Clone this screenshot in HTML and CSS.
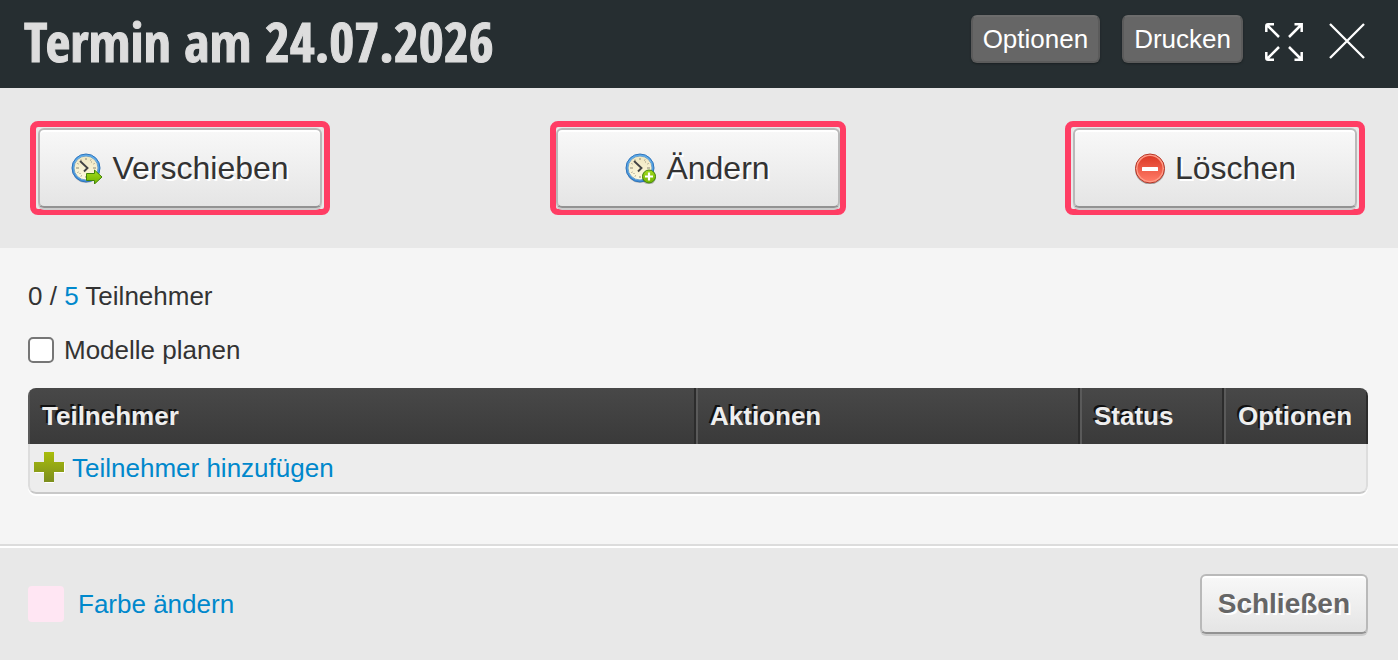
FILE: index.html
```html
<!DOCTYPE html>
<html lang="de">
<head>
<meta charset="utf-8">
<title>Termin am 24.07.2026</title>
<link rel="stylesheet" href="styles.css">
</head>
<body>
<svg class="defs" aria-hidden="true">
  <defs>
    <linearGradient id="face" x1="0" y1="0" x2="0" y2="1"><stop offset="0" stop-color="#efe6c0"/><stop offset="1" stop-color="#fffbe0"/></linearGradient>
    <linearGradient id="rim" x1="0" y1="0" x2="0" y2="1"><stop offset="0" stop-color="#5fb0f0"/><stop offset="1" stop-color="#3f8fdb"/></linearGradient>
    <linearGradient id="green" x1="0" y1="0" x2="0" y2="1"><stop offset="0" stop-color="#a5dc1c"/><stop offset="1" stop-color="#6fb400"/></linearGradient>
    <linearGradient id="red" x1="0" y1="0" x2="0" y2="1"><stop offset="0" stop-color="#dc3a26"/><stop offset="1" stop-color="#ff7a66"/></linearGradient>
    <linearGradient id="olive" x1="0" y1="0" x2="0" y2="1"><stop offset="0" stop-color="#a9bd0c"/><stop offset="1" stop-color="#7c8e1e"/></linearGradient>
    <g id="clock">
      <circle cx="15" cy="16" r="14" fill="#000" opacity=".18"/>
      <circle cx="15" cy="15" r="14" fill="url(#rim)" stroke="#2f74ba" stroke-width="1"/>
      <circle cx="15" cy="15" r="12" fill="url(#face)" stroke="#6fa3cc" stroke-width="1"/>
      <path d="M15 5v2M15 23v2M5 15h3M22 15h3M21 8.500l-.8.800M8.500 21l.8-.8M10 6.500l.5 1M20 6.500l-.5 1M6.500 10.500l1 .5M23.500 10.500l-1 .5M6.500 19.500l1-.5M10 23.500l.5-1" stroke="#8d8874" stroke-width="1" fill="none"/>
      <path d="M9 8l7.500 7-3.500 3.500" stroke="#444" stroke-width="1.900" fill="none"/>
    </g>
  </defs>
</svg>
<main class="dialog">
  <header class="header">
    <h1 class="title">Termin am 24.07.2026</h1>
    <div class="header-tools">
      <button class="tool" type="button">Optionen</button>
      <button class="tool" type="button">Drucken</button>
      <button class="icon-button expand" type="button" aria-label="Vollbild">
        <svg width="38" height="38" viewBox="0 0 38 38" fill="none" stroke="#fff" stroke-width="2.500">
          <path d="M1.300 9V3q0-1.700 1.700-1.700h6M2 2l12 12M29.500 1.300h7.200v7.700M36 2L24 14M1.300 29v6q0 1.700 1.700 1.700h6M2 36l12-12M29.500 36.700h7.200V29M36 36L24 24"/>
        </svg>
      </button>
      <button class="icon-button" type="button" aria-label="Dialog schließen">
        <svg width="36" height="36" viewBox="0 0 36 36" fill="none" stroke="#fff" stroke-width="2.300"><path d="M1 1l34 34M35 1L1 35"/></svg>
      </button>
    </div>
  </header>

  <section class="actions">
    <div class="frame">
      <button class="button action" type="button">
        <svg width="32" height="32" viewBox="0 -1 32 32"><use href="#clock"/><path d="M15.500 20.500h8v-3.500l7.500 7-7.500 7v-3.500h-8z" fill="url(#green)" stroke="#42850a" stroke-width="1"/></svg>
        <span>Verschieben</span>
      </button>
    </div>
    <div class="frame frame-flush">
      <button class="button action" type="button">
        <svg width="32" height="32" viewBox="0 -1 32 32"><use href="#clock"/><circle cx="24" cy="24.500" r="7" fill="#000" opacity=".2"/><circle cx="24" cy="23.500" r="6.500" fill="url(#green)" stroke="#42850a" stroke-width="1"/><path d="M24 19.500v8M20 23.500h8" stroke="#fff" stroke-width="2.200"/></svg>
        <span>Ändern</span>
      </button>
    </div>
    <div class="frame">
      <button class="button action" type="button">
        <svg width="32" height="32" viewBox="0 -2 32 32"><circle cx="16" cy="15.500" r="15" fill="#000" opacity=".3"/><circle cx="16" cy="14.500" r="14.500" fill="#ff9b87" stroke="#b63526" stroke-width="1"/><circle cx="16" cy="14.500" r="12.500" fill="url(#red)"/><rect x="8" y="13" width="16" height="4" rx=".5" fill="#fff"/></svg>
        <span>Löschen</span>
      </button>
    </div>
  </section>

  <section class="content">
    <p class="count">0 / <a class="link" href="#">5</a> Teilnehmer</p>
    <label class="check"><input type="checkbox"><span>Modelle planen</span></label>
    <div class="table-box">
      <table class="table">
        <thead>
          <tr><th>Teilnehmer</th><th class="col-actions">Aktionen</th><th class="col-small">Status</th><th class="col-small">Optionen</th></tr>
        </thead>
        <tbody>
          <tr><td colspan="4">
            <a class="link add" href="#"><svg width="32" height="32" viewBox="1 1 32 32"><path d="M12 2h9v10h11v10H21v10H12V22H2V12h10z" fill="#fff"/><path d="M11 1h10v10h10v10H21v10H11V21H1V11h10z" fill="url(#olive)"/></svg><span>Teilnehmer hinzufügen</span></a>
          </td></tr>
        </tbody>
      </table>
    </div>
  </section>

  <footer class="footer">
    <a class="link color" href="#"><span class="swatch"></span><span>Farbe ändern</span></a>
    <button class="button close" type="button">Schließen</button>
  </footer>
</main>
</body>
</html>
```

FILE: styles.css
```css
* { box-sizing: border-box; }

body {
  margin: 0;
  background: #e8e8e8;
  color: #333;
  font: 26px/36px Helvetica, "Liberation Sans", Arial, sans-serif;
}

button {
  margin: 0;
  font-family: inherit;
  cursor: pointer;
}

svg { display: block; flex: none; }

.defs { position: absolute; width: 0; height: 0; }

.dialog {
  display: flex;
  flex-direction: column;
  min-height: 100vh;
}

.header {
  display: flex;
  justify-content: space-between;
  padding: 0 33px 0 24px;
  min-height: 88px;
  background: #262e31;
}

.title {
  margin: 0;
  color: #ddd;
  font: bold 54px/82px "Open Sans Condensed", "Liberation Sans Narrow", "Roboto Condensed", sans-serif;
  -webkit-text-stroke: 1px #ddd;
}

.header-tools {
  display: flex;
  align-items: flex-start;
  padding-top: 15px;
}

.tool {
  height: 48px;
  margin-right: 22px;
  padding: 0 10px;
  border: 2px solid #5b5b5b;
  border-top-color: #6c6c6c;
  border-radius: 6px;
  background: #666;
  box-shadow: 0 1px 2px #1a2022;
  color: #fff;
  font-size: 26px;
  line-height: 44px;
}

.icon-button {
  margin-top: 8px;
  padding: 0;
  border: 0;
  background: none;
}

.expand { margin-right: 26px; }

.actions {
  display: flex;
  justify-content: space-between;
  align-items: center;
  padding: 33px 33px 33px 30px;
  background: #e8e8e8;
}

.frame {
  padding: 1px 2px;
  border: 6px solid #ff3d64;
  border-radius: 8px;
}

.frame-flush { padding-left: 0; padding-right: 0; }

.button {
  border: 2px solid #b9b9b9;
  border-bottom-color: #929292;
  border-radius: 6px;
  background: linear-gradient(#f8f8f8, #e5e5e5);
  box-shadow: inset 0 2px 0 #fff, 0 2px 0 #ccc;
  text-shadow: 2px 2px 0 #fff;
}

.action {
  display: flex;
  align-items: center;
  justify-content: center;
  gap: 9px;
  width: 284px;
  height: 80px;
  color: #333;
  font-size: 32px;
}

.content {
  flex: 1;
  padding: 30px 30px 50px 28px;
  background: #f5f5f5;
}

.count { margin: 0 0 18px; }

.link { color: #0088cc; text-decoration: none; }

.check {
  display: flex;
  align-items: center;
  gap: 10px;
  margin-bottom: 20px;
}

.check input {
  appearance: none;
  width: 26px;
  height: 26px;
  margin: 0;
  border: 2px solid #767676;
  border-radius: 5px;
  background: #fff;
}

.table-box {
  overflow: hidden;
  border-radius: 8px;
  box-shadow: 0 2px 0 #fff;
}

.table {
  width: 100%;
  border-collapse: separate;
  border-spacing: 0;
  table-layout: fixed;
}

.table th {
  height: 56px;
  padding: 0 12px;
  border-left: 2px solid #5a5a5a;
  border-right: 2px solid #2c2c2c;
  background: linear-gradient(#484848, #3a3a3a);
  color: #eee;
  text-align: left;
  text-shadow: -2px -2px 0 #111;
}

.table th:last-child { padding-right: 0; }

.table .col-actions { width: 384px; }
.table .col-small { width: 144px; }

.table td {
  height: 50px;
  padding: 0 4px;
  border: 2px solid #ddd;
  border-top: 0;
  border-bottom-color: #c8c8c8;
  border-radius: 0 0 8px 8px;
  background: #ededed;
}

.add {
  display: flex;
  align-items: center;
  gap: 6px;
}

.footer {
  display: flex;
  justify-content: space-between;
  align-items: center;
  min-height: 116px;
  padding: 2px 30px 0 28px;
  border-top: 2px solid #dcdcdc;
  background: #e8e8e8;
  box-shadow: inset 0 2px 0 #fff;
}

.color {
  display: flex;
  align-items: center;
  gap: 14px;
}

.swatch {
  width: 36px;
  height: 36px;
  border-radius: 4px;
  background: #ffe6f3;
}

.close {
  height: 60px;
  padding: 0 16px;
  color: #666;
  font-size: 28px;
  font-weight: bold;
}
```
